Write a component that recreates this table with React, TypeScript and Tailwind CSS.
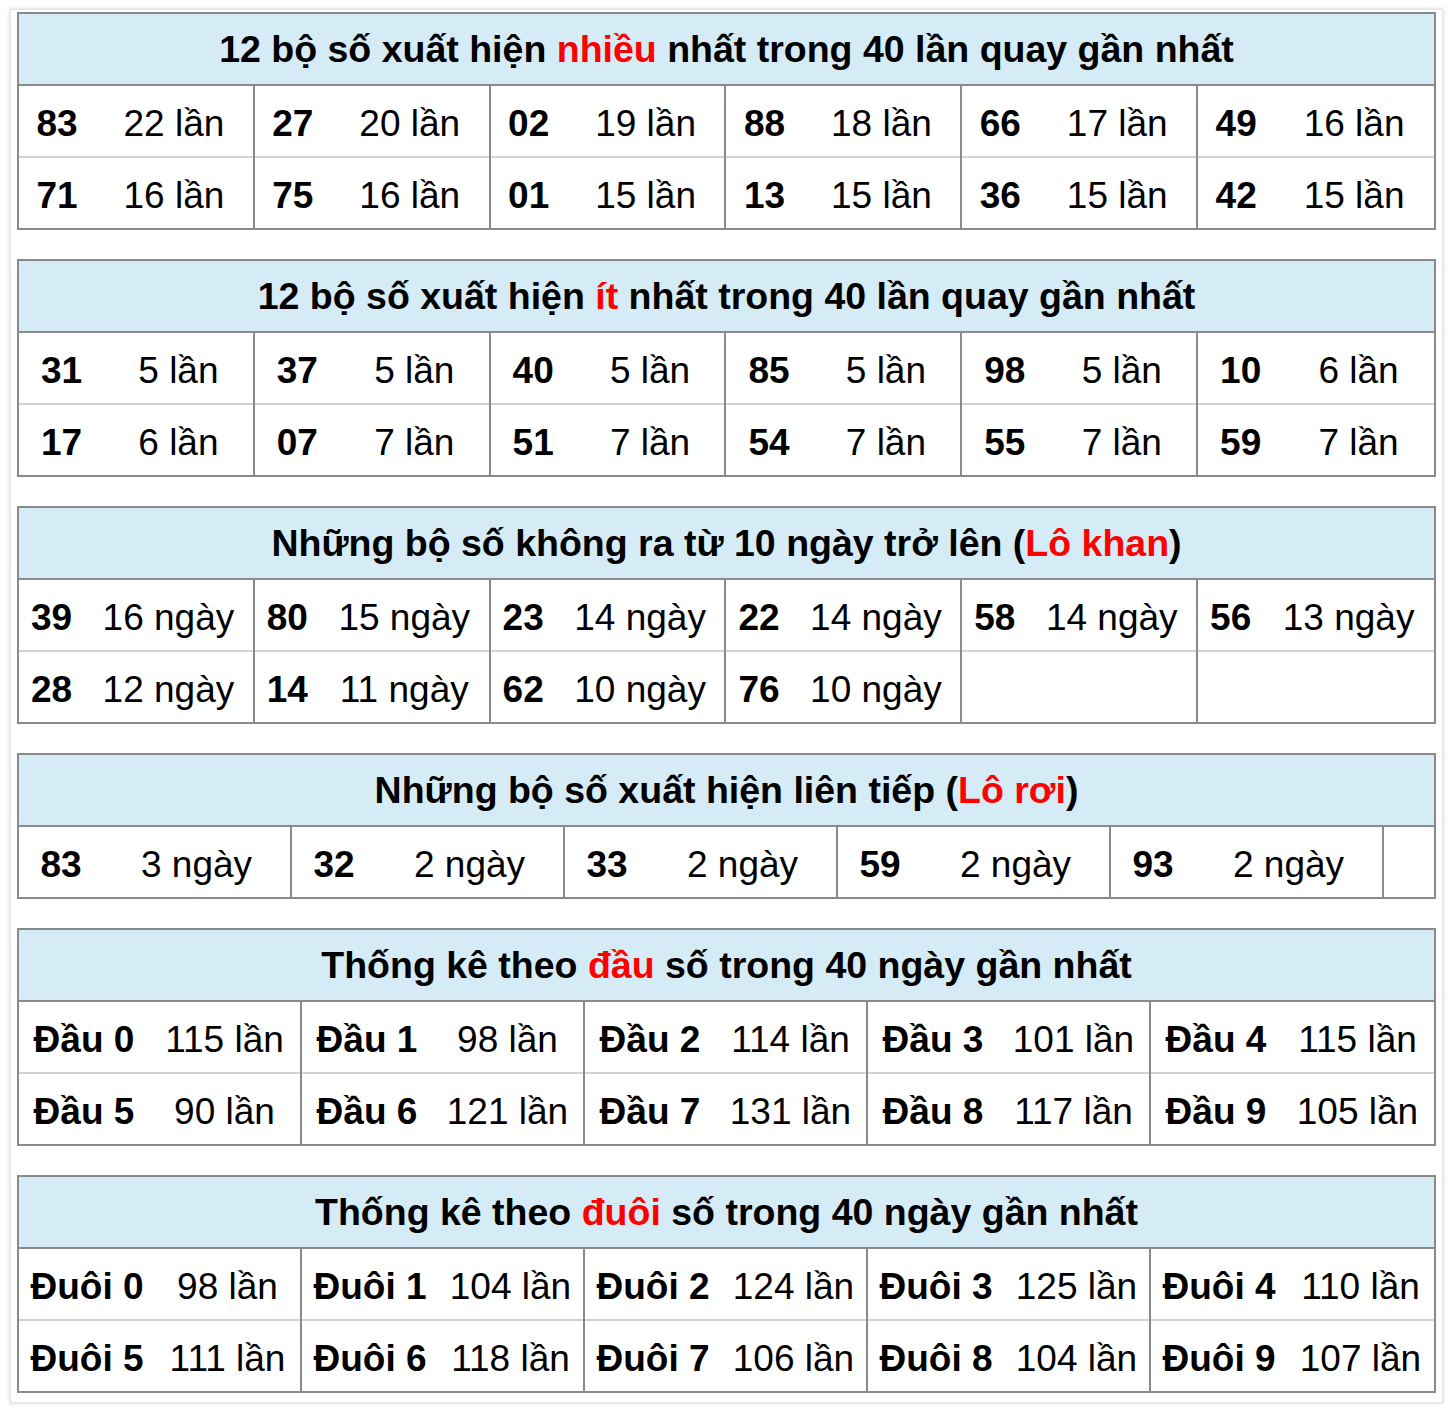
import React from "react";

type Item = [string, string] | null;

interface TableProps {
  title: React.ReactNode;
  columns: Item[][]; // each column holds its rows, top to bottom
  gridClass: string;
  numClass: string;
  last?: boolean;
}

const Red = ({ children }: { children: React.ReactNode }) => (
  <span className="text-[#ff0000]">{children}</span>
);

const StatTable = ({ title, columns, gridClass, numClass, last }: TableProps) => {
  return (
    <div className={`border-2 border-[#8a8a8a] ${last ? "" : "mb-[29px]"}`}>
      <div className="h-[72px] bg-[#d5ebf5] border-b-2 border-[#8a8a8a] flex items-center justify-center pt-[2px] text-[37.5px] font-bold text-black">
        <span>{title}</span>
      </div>
      <div className={`grid ${gridClass}`}>
        {columns.map((col, ci) => (
          <div
            key={ci}
            className={`flex flex-col ${ci < columns.length - 1 ? "border-r-2 border-[#8a8a8a]" : ""}`}
          >
            {col.map((item, ri) => (
              <div
                key={ri}
                className={`flex items-center pt-[4px] ${ri < col.length - 1 ? "h-[72px] border-b-2 border-[#d2d2d2]" : "h-[70px]"}`}
              >
                {item && (
                  <>
                    <div className={`${numClass} shrink-0 text-center font-bold`}>{item[0]}</div>
                    <div className="flex-1 text-center">{item[1]}</div>
                  </>
                )}
              </div>
            ))}
          </div>
        ))}
      </div>
    </div>
  );
};

const pairs = (top: Item[], bottom?: Item[]): Item[][] =>
  top.map((t, i) => (bottom ? [t, bottom[i]] : [t]));

// dữ liệu thống kê
const most = pairs(
  [["83", "22 lần"], ["27", "20 lần"], ["02", "19 lần"], ["88", "18 lần"], ["66", "17 lần"], ["49", "16 lần"]],
  [["71", "16 lần"], ["75", "16 lần"], ["01", "15 lần"], ["13", "15 lần"], ["36", "15 lần"], ["42", "15 lần"]]
);

const least = pairs(
  [["31", "5 lần"], ["37", "5 lần"], ["40", "5 lần"], ["85", "5 lần"], ["98", "5 lần"], ["10", "6 lần"]],
  [["17", "6 lần"], ["07", "7 lần"], ["51", "7 lần"], ["54", "7 lần"], ["55", "7 lần"], ["59", "7 lần"]]
);

const khan = pairs(
  [["39", "16 ngày"], ["80", "15 ngày"], ["23", "14 ngày"], ["22", "14 ngày"], ["58", "14 ngày"], ["56", "13 ngày"]],
  [["28", "12 ngày"], ["14", "11 ngày"], ["62", "10 ngày"], ["76", "10 ngày"], null, null]
);

const roi = pairs([["83", "3 ngày"], ["32", "2 ngày"], ["33", "2 ngày"], ["59", "2 ngày"], ["93", "2 ngày"], null]);

const dau = pairs(
  [["Đầu 0", "115 lần"], ["Đầu 1", "98 lần"], ["Đầu 2", "114 lần"], ["Đầu 3", "101 lần"], ["Đầu 4", "115 lần"]],
  [["Đầu 5", "90 lần"], ["Đầu 6", "121 lần"], ["Đầu 7", "131 lần"], ["Đầu 8", "117 lần"], ["Đầu 9", "105 lần"]]
);

const duoi = pairs(
  [["Đuôi 0", "98 lần"], ["Đuôi 1", "104 lần"], ["Đuôi 2", "124 lần"], ["Đuôi 3", "125 lần"], ["Đuôi 4", "110 lần"]],
  [["Đuôi 5", "111 lần"], ["Đuôi 6", "118 lần"], ["Đuôi 7", "106 lần"], ["Đuôi 8", "104 lần"], ["Đuôi 9", "107 lần"]]
);

const App = () => {
  return (
    <div className="min-h-[1414px] bg-white pt-[9px] pl-[10px] font-['Liberation_Sans',Arial,sans-serif] text-[37px] text-black leading-none">
      <div className="w-[1433px] px-[6px] pt-[2px] pb-[9px] bg-white border border-[#e4e4e4] shadow-[0_0_4px_rgba(0,0,0,0.18)]">
        <StatTable
          title={<>12 bộ số xuất hiện <Red>nhiều</Red> nhất trong 40 lần quay gần nhất</>}
          columns={most}
          gridClass="grid-cols-6"
          numClass="w-[76px]"
        />
        <StatTable
          title={<>12 bộ số xuất hiện <Red>ít</Red> nhất trong 40 lần quay gần nhất</>}
          columns={least}
          gridClass="grid-cols-6"
          numClass="w-[85px]"
        />
        <StatTable
          title={<>Những bộ số không ra từ 10 ngày trở lên (<Red>Lô khan</Red>)</>}
          columns={khan}
          gridClass="grid-cols-6"
          numClass="w-[65px]"
        />
        <StatTable
          title={<>Những bộ số xuất hiện liên tiếp (<Red>Lô rơi</Red>)</>}
          columns={roi}
          gridClass="grid-cols-[repeat(5,273px)_1fr]"
          numClass="w-[84px]"
        />
        <StatTable
          title={<>Thống kê theo <Red>đầu</Red> số trong 40 ngày gần nhất</>}
          columns={dau}
          gridClass="grid-cols-5"
          numClass="w-[130px]"
        />
        <StatTable
          title={<>Thống kê theo <Red>đuôi</Red> số trong 40 ngày gần nhất</>}
          columns={duoi}
          gridClass="grid-cols-5"
          numClass="w-[136px]"
          last
        />
      </div>
    </div>
  );
};

export default App;
